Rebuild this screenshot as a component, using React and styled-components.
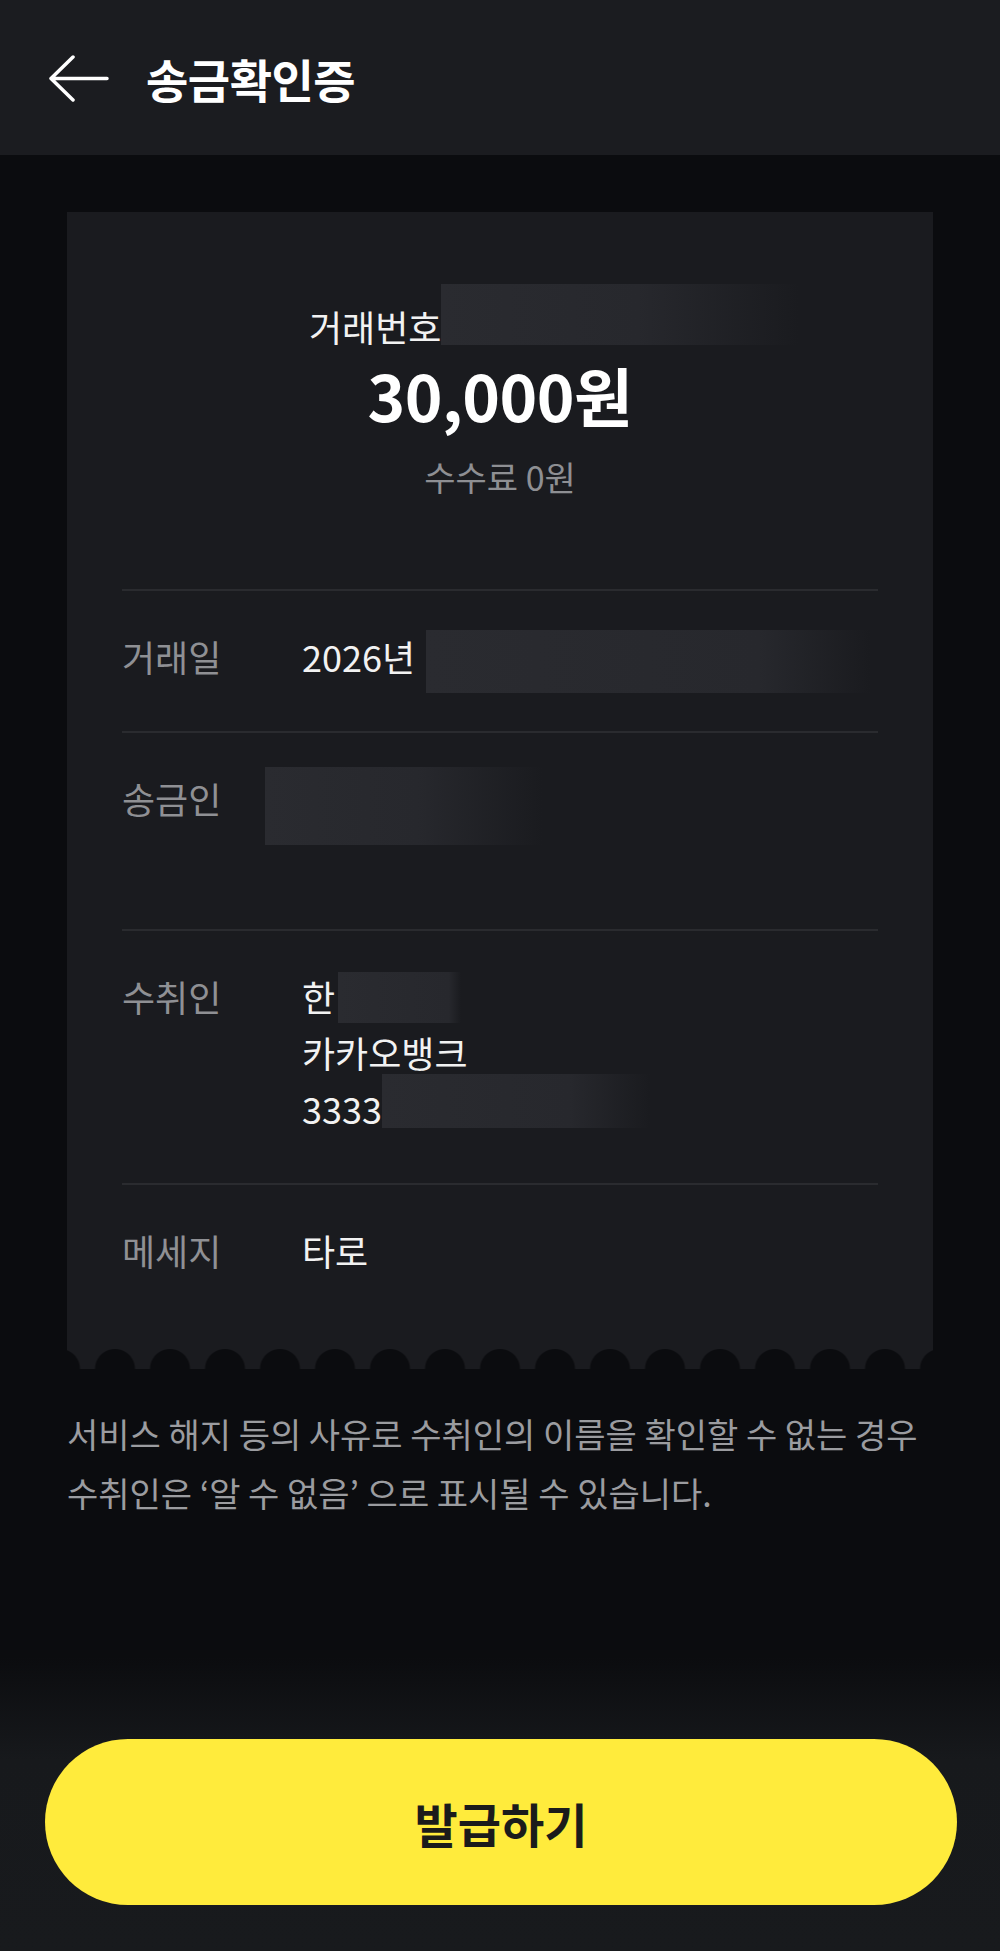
import React from 'react';
import styled, { createGlobalStyle } from 'styled-components';

const GlobalStyle = createGlobalStyle`
  html, body {
    margin: 0;
    padding: 0;
    background: #0b0c0f;
  }

  body {
    font-family: 'Noto Sans CJK KR', 'Noto Sans', sans-serif;
    -webkit-font-smoothing: antialiased;
  }
`;

const PAGE_BG = '#0b0c0f';
const CARD_BG = '#1a1b1f';

const Page = styled.div`
  display: flex;
  flex-direction: column;
  min-height: 1951px;
  background: ${PAGE_BG};
`;

const Header = styled.header`
  display: flex;
  align-items: center;
  gap: 37px;
  height: 155px;
  padding-left: 49px;
  background: #1b1c20;
`;

const BackButton = styled.button`
  display: flex;
  padding: 0;
  border: none;
  background: none;
  cursor: pointer;
`;

const Title = styled.h1`
  margin: 0;
  font-size: 46px;
  font-weight: 700;
  letter-spacing: -0.5px;
  color: #ffffff;
`;

const Main = styled.main`
  padding: 57px 67px 0;
`;

const Ticket = styled.section`
  background: ${CARD_BG};
`;

const Summary = styled.div`
  display: flex;
  flex-direction: column;
  align-items: center;
  padding: 86px 0 92px;
`;

const TxnLine = styled.div`
  display: flex;
  align-items: center;
  align-self: flex-start;
  height: 56px;
  padding-left: 242px;
  font-size: 36px;
  color: #f2f2f2;
`;

const Amount = styled.div`
  font-size: 64px;
  font-weight: 700;
  line-height: 80px;
  letter-spacing: -0.5px;
  color: #ffffff;
`;

const Fee = styled.div`
  margin-top: 23px;
  font-size: 34px;
  line-height: 40px;
  color: #8e8f93;
`;

const Details = styled.div`
  padding: 0 55px 24px;
`;

const Row = styled.div`
  display: grid;
  grid-template-columns: 180px 1fr;
  padding: 37px 0 47px;
  border-top: 2px solid #2a2b2f;
`;

const Label = styled.div`
  font-size: 36px;
  line-height: 56px;
  color: #8f9094;
`;

const Value = styled.div`
  display: flex;
  flex-direction: column;
`;

const ValueLine = styled.div`
  display: flex;
  align-items: center;
  height: 56px;
  font-size: 36px;
  color: #f2f2f2;
  white-space: nowrap;
`;

const Redaction = styled.span`
  display: block;
  flex: none;
  width: ${(p) => p.w}px;
  height: ${(p) => p.h}px;
  margin-left: ${(p) => p.ml || 0}px;
  transform: translateY(${(p) => p.dy || 0}px);
  background: linear-gradient(
    90deg,
    #2a2b30 0%,
    #27282d ${(p) => p.fade || 70}%,
    rgba(26, 27, 31, 0) 100%
  );
`;

const ScallopEdge = styled.div`
  height: 20px;
  background-color: ${CARD_BG};
  background-image: radial-gradient(
    circle at 50% 100%,
    ${PAGE_BG} 19.5px,
    transparent 20.5px
  );
  background-size: 55px 20px;
  background-position: center bottom;
  background-repeat: repeat-x;
`;

const Notice = styled.p`
  margin: 35px 0 0;
  font-size: 34px;
  line-height: 59px;
  color: #9b9ca0;
  white-space: nowrap;
`;

const Footer = styled.footer`
  margin-top: auto;
  padding: 82px 43px 46px 45px;
  background: linear-gradient(180deg, ${PAGE_BG} 0%, #17191c 35%, #181a1d 100%);
`;

const IssueButton = styled.button`
  width: 100%;
  height: 166px;
  border: none;
  border-radius: 83px;
  background: #ffeb3c;
  font-family: inherit;
  font-size: 47px;
  font-weight: 700;
  color: #1b1b1b;
  cursor: pointer;
`;

const BackArrow = () => (
  <svg width="60" height="48" viewBox="0 0 60 48" fill="none">
    <path
      d="M24 3 L2 24.5 L24 46 M2 24.5 H58"
      stroke="#ffffff"
      strokeWidth="3.5"
      strokeLinecap="round"
      strokeLinejoin="round"
    />
  </svg>
);

const App = () => {
  return (
    <>
      <GlobalStyle />
      <Page>
        <Header>
          <BackButton aria-label="뒤로">
            <BackArrow />
          </BackButton>
          <Title>송금확인증</Title>
        </Header>

        <Main>
          <Ticket>
            <Summary>
              <TxnLine>
                거래번호
                <Redaction w={358} h={61} dy={-12} fade={55} />
              </TxnLine>
              <Amount>30,000원</Amount>
              <Fee>수수료 0원</Fee>
            </Summary>

            <Details>
              <Row>
                <Label>거래일</Label>
                <Value>
                  <ValueLine>
                    2026년
                    <Redaction w={444} h={63} ml={11} dy={5} fade={75} />
                  </ValueLine>
                </Value>
              </Row>
              <Row>
                <Label>송금인</Label>
                <Value>
                  <ValueLine>
                    <Redaction w={278} h={78} ml={-37} dy={8} fade={55} />
                  </ValueLine>
                  <ValueLine />
                </Value>
              </Row>
              <Row>
                <Label>수취인</Label>
                <Value>
                  <ValueLine>
                    한
                    <Redaction w={123} h={51} ml={3} dy={1} fade={90} />
                  </ValueLine>
                  <ValueLine>카카오뱅크</ValueLine>
                  <ValueLine>
                    3333
                    <Redaction w={268} h={54} dy={-7} fade={70} />
                  </ValueLine>
                </Value>
              </Row>
              <Row>
                <Label>메세지</Label>
                <Value>
                  <ValueLine>타로</ValueLine>
                </Value>
              </Row>
            </Details>
            <ScallopEdge />
          </Ticket>

          <Notice>
            서비스 해지 등의 사유로 수취인의 이름을 확인할 수 없는 경우
            <br />
            수취인은 ‘알 수 없음’ 으로 표시될 수 있습니다.
          </Notice>
        </Main>

        <Footer>
          <IssueButton>발급하기</IssueButton>
        </Footer>
      </Page>
    </>
  );
};

export default App;
